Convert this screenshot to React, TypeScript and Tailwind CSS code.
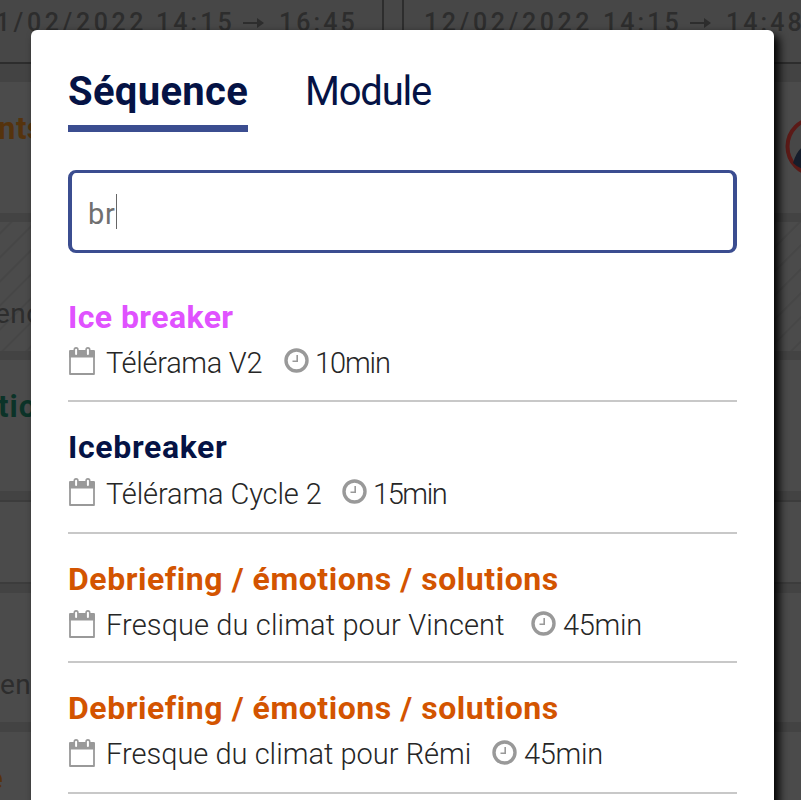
import React from "react";

type Item = {
  title: string;
  titleClass: string;
  project: string;
  projectClass: string;
  duration: string;
  durationClass: string;
  metaClass: string;
  rowClass: string;
};

const items: Item[] = [
  {
    title: "Ice breaker",
    titleClass: "mt-[28px] text-[#e052ff] tracking-[0.42px]",
    project: "Télérama V2",
    projectClass: "w-[178px] pt-[2px] tracking-[-0.3px]",
    duration: "10min",
    durationClass: "ml-[6px] pt-[2px] tracking-[-1.1px]",
    metaClass: "mt-[5px]",
    rowClass: "h-[131px]",
  },
  {
    title: "Icebreaker",
    titleClass: "mt-[27px] text-[#051345] tracking-[0.65px]",
    project: "Télérama Cycle 2",
    projectClass: "w-[236px] pt-[2px] tracking-[-0.12px]",
    duration: "15min",
    durationClass: "ml-[6px] pt-[2px] tracking-[-1.4px]",
    metaClass: "mt-[6px]",
    rowClass: "h-[132px]",
  },
  {
    title: "Debriefing / émotions / solutions",
    titleClass: "mt-[27px] text-[#d35400] tracking-[0.55px]",
    project: "Fresque du climat pour Vincent",
    projectClass: "w-[425px] tracking-[0.13px]",
    duration: "45min",
    durationClass: "ml-[7px] tracking-[-0.3px]",
    metaClass: "mt-[6px]",
    rowClass: "h-[129px]",
  },
  {
    title: "Debriefing / émotions / solutions",
    titleClass: "mt-[27px] text-[#d35400] tracking-[0.55px]",
    project: "Fresque du climat pour Rémi",
    projectClass: "w-[386px] tracking-[0.02px]",
    duration: "45min",
    durationClass: "ml-[7px] tracking-[-0.3px]",
    metaClass: "mt-[6px]",
    rowClass: "h-[131px]",
  },
];

function CalendarIcon() {
  return (
    <svg width="26" height="28" viewBox="0 0 26 28" className="mb-[2px] shrink-0">
      <path d="M1 4H25V27H1Z" fill="#fff" stroke="#999" strokeWidth="1.8" strokeLinejoin="round" />
      <path d="M0.1 5Q0.1 3.8 1.4 3.8H24.6Q25.9 3.8 25.9 5V10.5H0.1Z" fill="#999" />
      <rect x="5.3" y="0.9" width="3.6" height="8" rx="1.8" fill="#fff" stroke="#999" strokeWidth="1.6" />
      <rect x="17.1" y="0.9" width="3.6" height="8" rx="1.8" fill="#fff" stroke="#999" strokeWidth="1.6" />
    </svg>
  );
}

function ClockIcon() {
  return (
    <svg width="25" height="25" viewBox="0 0 25 25" className="mb-[3px] shrink-0">
      <circle cx="12.5" cy="12.5" r="10.5" fill="#fff" stroke="#999" strokeWidth="3.4" />
      <path d="M13.2 7V13.3H8.5" fill="none" stroke="#999" strokeWidth="1.6" />
    </svg>
  );
}

function ResultRow({ item }: { item: Item }) {
  return (
    <li className={"flex flex-col border-b-2 border-[#c8c8c8] " + item.rowClass}>
      <div className={"h-[38px] whitespace-nowrap text-[32px] font-bold leading-[36px] " + item.titleClass}>
        {item.title}
      </div>
      <div className={"flex h-[40px] items-center pl-px text-[29px] font-light leading-[40px] text-[#262626] " + item.metaClass}>
        <CalendarIcon />
        <span className={"ml-[11px] shrink-0 whitespace-nowrap " + item.projectClass}>{item.project}</span>
        <ClockIcon />
        <span className={"whitespace-nowrap " + item.durationClass}>{item.duration}</span>
      </div>
    </li>
  );
}

function Hatching({ id }: { id: string }) {
  return (
    <svg className="absolute inset-0 h-full w-full">
      <defs>
        <pattern id={id} width="17" height="17" patternUnits="userSpaceOnUse" patternTransform="rotate(45)">
          <path d="M8 0V17" stroke="#464646" strokeWidth="2" />
        </pattern>
      </defs>
      <rect width="100%" height="100%" fill={"url(#" + id + ")"} />
    </svg>
  );
}

function Column({
  id,
  columnClass,
  header,
  texts,
  avatar,
}: {
  id: string;
  columnClass: string;
  header: React.ReactNode;
  texts: string[];
  avatar?: boolean;
}) {
  return (
    <section className={"flex shrink-0 flex-col overflow-hidden whitespace-nowrap bg-[#434343] text-[#2d2d2d] " + columnClass}>
      <div className="mb-[18px] h-[64px] shrink-0 border-b-2 border-[#2d2d2d] bg-[#474747]">{header}</div>
      <div className="flex h-[131px] shrink-0 justify-between bg-[#4b4b4b]">
        <span className="-ml-[2px] pt-[27px] text-[31px] font-bold leading-10 tracking-[0.5px] text-[#55330d]">{texts[0]}</span>
        {avatar && (
          <svg width="60" height="70" className="mt-[29px]" viewBox="0 0 60 70">
            <circle cx="31.5" cy="35.5" r="28" fill="#474747" stroke="#5b1a17" strokeWidth="4" />
            <path d="M9 52Q13 38 22 34L32 32V61Q16 59 9 52Z" fill="#151d2b" />
          </svg>
        )}
      </div>
      <div className="relative mt-[9px] h-[129px] shrink-0 bg-[#4b4b4b] pt-[72px]">
        <Hatching id={id} />
        <span className="relative -left-[5px] text-[28px] leading-10 tracking-[0.5px]">{texts[1]}</span>
      </div>
      <div className="mt-[9px] h-[131px] shrink-0 bg-[#4b4b4b] pt-[27px] text-[31px] font-bold leading-10 tracking-[1px] text-[#0b3328]">
        <span className="relative -left-[2px]">{texts[2]}</span>
      </div>
      <div className="mt-[9px] h-[84px] shrink-0 border-y-2 border-[#3c3c3c] bg-[#4b4b4b]" />
      <div className="mt-[9px] h-[129px] shrink-0 bg-[#4b4b4b] pt-[72px] text-[28px] leading-10 tracking-[0.5px]">
        {texts[3]}
      </div>
      <div className="mt-[10px] flex-1 bg-[#4b4b4b] pt-[27px] text-[31px] font-bold leading-10 text-[#55330d]">
        <span className="relative -left-[14px]">{texts[4]}</span>
      </div>
    </section>
  );
}

function Arrow() {
  return (
    <svg width="22" height="14" viewBox="0 0 22 14" className="shrink-0">
      <path d="M0 7H17" stroke="#2d2d2d" strokeWidth="2" />
      <path d="M14 2L21 7L14 12Z" fill="#2d2d2d" />
    </svg>
  );
}

export default function App() {
  return (
    <div className="relative h-[800px] w-[801px] overflow-hidden bg-[#434343] font-['Roboto',sans-serif]">
      <div className="flex h-full">
        <Column
          id="hatch-left"
          columnClass="w-[384px] border-r-2 border-[#2d2d2d]"
          texts={["nts", "enc", "tio", "en", "e"]}
          header={
            <div className="flex h-[46px] items-center text-[25px] font-medium tracking-[3.1px]">
              <span className="-ml-[22px] w-[178px] shrink-0 tracking-[3.6px]">11/02/2022</span>
              <span className="w-[87px] shrink-0">14:15</span>
              <Arrow />
              <span className="ml-[14px]">16:45</span>
            </div>
          }
        />
        <div className="w-[18px] shrink-0">
          <div className="h-[64px] border-b-2 border-[#2d2d2d] bg-[#474747]" />
        </div>
        <Column
          id="hatch-right"
          columnClass="w-[442px] border-l-2 border-[#2d2d2d]"
          avatar
          texts={["", "", "", "", ""]}
          header={
            <div className="flex h-[46px] items-center pl-[20px] text-[25px] font-medium tracking-[3.1px]">
              <span className="w-[179px] shrink-0 tracking-[3.6px]">12/02/2022</span>
              <span className="w-[87px] shrink-0">14:15</span>
              <Arrow />
              <span className="ml-[14px]">14:48</span>
            </div>
          }
        />
      </div>

      <div className="absolute left-[31px] top-[30px] h-[800px] w-[743px] rounded-[6px] bg-white px-[37px] shadow-[5px_5px_10px_#000]">
        <nav className="flex h-[103px] gap-[57px] pt-[38px] text-[40px] leading-[48px] text-[#051345]">
          <div className="h-[64px] w-[180px] whitespace-nowrap border-b-[7px] border-[#3b4d90] font-bold tracking-[0.3px]">
            Séquence
          </div>
          <div className="whitespace-nowrap tracking-[-1.2px]">Module</div>
        </nav>
        <div className="mt-[37px] flex h-[83px] items-center rounded-[8px] border-[3px] border-[#3b4d90] border-x-4 pl-[16px] pt-[4px]">
          <span className="text-[29px] leading-9 tracking-[0.8px] text-[#707070]">br</span>
          <span className="h-[35px] w-px -translate-y-[2px] bg-[#666]" />
        </div>
        <ul className="mt-[18px]">
          {items.map((item, i) => (
            <ResultRow key={i} item={item} />
          ))}
        </ul>
      </div>
    </div>
  );
}
